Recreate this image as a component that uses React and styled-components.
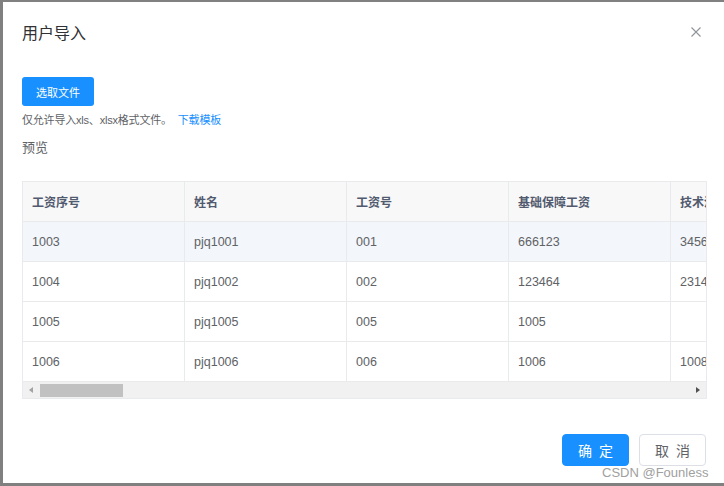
import React from 'react';
import styled, { createGlobalStyle } from 'styled-components';

const GlobalStyle = createGlobalStyle`
  html, body {
    margin: 0;
    padding: 0;
    width: 724px;
    height: 486px;
    overflow: hidden;
    background: #808080;
    font-family: "Liberation Sans", Arial, "Noto Sans CJK SC", sans-serif;
  }
`;

const Overlay = styled.div`
  position: relative;
  width: 724px;
  height: 486px;
  padding: 2px 0 0 3px;
  box-sizing: border-box;
`;

const Dialog = styled.div`
  width: 721px;
  height: 481px;
  background: #fff;
  display: flex;
  flex-direction: column;
  box-sizing: border-box;
`;

const Header = styled.div`
  display: flex;
  align-items: center;
  justify-content: space-between;
  padding: 18px 21px 0 19px;
  height: 24px;
`;

const Title = styled.span`
  font-size: 16px;
  line-height: 24px;
  color: #303133;
  font-family: "Noto Sans CJK SC", sans-serif;
`;

const CloseBtn = styled.button`
  width: 14px;
  height: 14px;
  padding: 0;
  border: none;
  background: transparent;
  display: flex;
  align-items: center;
  justify-content: center;
  cursor: pointer;
`;

const Body = styled.div`
  flex: 1;
  padding: 33px 0 0 19px;
  display: flex;
  flex-direction: column;
`;

const PrimaryBtn = styled.button`
  width: 72px;
  height: 29px;
  border: none;
  border-radius: 3px;
  background: #1890ff;
  color: #fff;
  font-size: 11px;
  font-family: "Noto Sans CJK SC", sans-serif;
  cursor: pointer;
  padding: 0;
`;

const Tip = styled.div`
  margin-top: 4px;
  font-size: 11px;
  line-height: 20px;
  color: #606266;
  font-family: "Liberation Sans", "Noto Sans CJK SC", sans-serif;
  letter-spacing: -0.2px;
`;

const TipLink = styled.a`
  color: #1890ff;
  margin-left: 6px;
  text-decoration: none;
`;

const Label = styled.div`
  margin-top: 7px;
  font-size: 13px;
  line-height: 20px;
  color: #606266;
  font-family: "Noto Sans CJK SC", sans-serif;
`;

const TableWrap = styled.div`
  margin-top: 24px;
  width: 685px;
  border: 1px solid #e8eaec;
  box-sizing: border-box;
  overflow: hidden;
`;

const Row = styled.div`
  display: flex;
  height: 39px;
  border-bottom: 1px solid #e8eaec;
  background: ${p => (p.$head ? '#f8f8f9' : p.$hover ? '#f3f6fa' : '#fff')};
  box-sizing: content-box;
`;

const Cell = styled.div`
  flex: 0 0 162px;
  box-sizing: border-box;
  padding-left: 9px;
  display: flex;
  align-items: center;
  border-right: 1px solid #e8eaec;
  white-space: nowrap;
  overflow: hidden;
  font-size: ${p => (p.$head ? '12px' : '12.5px')};
  font-weight: ${p => (p.$head ? 700 : 400)};
  color: ${p => (p.$head ? '#515a6e' : '#606266')};
  font-family: "Liberation Sans", "Noto Sans CJK SC", sans-serif;
`;

const ScrollBar = styled.div`
  height: 16px;
  background: #f1f1f1;
  display: flex;
  align-items: center;
`;

const Arrow = styled.div`
  width: 0;
  height: 0;
  border-top: 3px solid transparent;
  border-bottom: 3px solid transparent;
  ${p => (p.$right
    ? 'border-left: 4px solid #505050; margin-left: auto; margin-right: 6px;'
    : 'border-right: 4px solid #a3a3a3; margin-left: 6px;')}
`;

const Thumb = styled.div`
  width: 83px;
  height: 13px;
  background: #c1c1c1;
  margin-left: 7px;
`;

const Footer = styled.div`
  display: flex;
  justify-content: flex-end;
  gap: 10px;
  padding: 0 18px 17px 0;
`;

const FootBtn = styled.button`
  width: 67px;
  height: 32px;
  border-radius: 4px;
  font-size: 14px;
  font-family: "Noto Sans CJK SC", sans-serif;
  letter-spacing: 2px;
  cursor: pointer;
  padding: 0 0 0 2px;
  border: 1px solid ${p => (p.$primary ? '#1890ff' : '#dcdfe6')};
  background: ${p => (p.$primary ? '#1890ff' : '#fff')};
  color: ${p => (p.$primary ? '#fff' : '#606266')};
`;

const Watermark = styled.div`
  position: absolute;
  left: 602px;
  top: 465px;
  font-size: 13px;
  color: #a0a0a0;
  font-family: "Liberation Sans", Arial, sans-serif;
  pointer-events: none;
`;

const columns = ['工资序号', '姓名', '工资号', '基础保障工资', '技术津贴'];
const rows = [
  ['1003', 'pjq1001', '001', '666123', '3456'],
  ['1004', 'pjq1002', '002', '123464', '2314'],
  ['1005', 'pjq1005', '005', '1005', ''],
  ['1006', 'pjq1006', '006', '1006', '1008'],
];

const CloseIcon = () => (
  <svg width="10" height="10" viewBox="0 0 10 10">
    <path d="M0.5 0.5L9.5 9.5M9.5 0.5L0.5 9.5" stroke="#909399" strokeWidth="1.1" />
  </svg>
);

export default function App() {
  return (
    <>
      <GlobalStyle />
      <Overlay>
        <Dialog>
          <Header>
            <Title>用户导入</Title>
            <CloseBtn><CloseIcon /></CloseBtn>
          </Header>
          <Body>
            <div>
              <PrimaryBtn>选取文件</PrimaryBtn>
            </div>
            <Tip>
              仅允许导入xls、xlsx格式文件。<TipLink href="#">下载模板</TipLink>
            </Tip>
            <Label>预览</Label>
            <TableWrap>
              <Row $head>
                {columns.map(c => <Cell key={c} $head>{c}</Cell>)}
              </Row>
              {rows.map((r, i) => (
                <Row key={i} $hover={i === 0}>
                  {r.map((v, j) => <Cell key={j}>{v}</Cell>)}
                </Row>
              ))}
              <ScrollBar>
                <Arrow />
                <Thumb />
                <Arrow $right />
              </ScrollBar>
            </TableWrap>
          </Body>
          <Footer>
            <FootBtn $primary>确 定</FootBtn>
            <FootBtn>取 消</FootBtn>
          </Footer>
        </Dialog>
        <Watermark>CSDN @Founless</Watermark>
      </Overlay>
    </>
  );
}
